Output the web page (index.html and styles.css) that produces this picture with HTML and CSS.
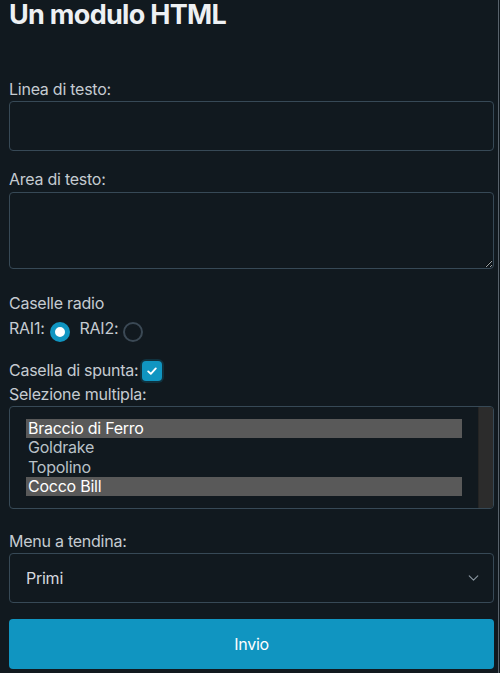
FILE: index.html
```html
<!DOCTYPE html>
<html lang="it">
<head>
<meta charset="utf-8">
<title>Un modulo HTML</title>
<link rel="stylesheet" href="styles.css">
</head>
<body>
<div class="frame">
  <main class="container">
    <h1 class="title">Un modulo HTML</h1>
    <form class="form" onsubmit="return false">
      <label class="field-label" for="linea">Linea di testo:</label>
      <input class="text-input" id="linea" type="text">

      <label class="field-label" for="area">Area di testo:</label>
      <textarea class="text-area" id="area"></textarea>

      <div class="field-label">Caselle radio</div>
      <div class="radio-row">
        <span class="inline-label">RAI1:</span><span class="radio radio-checked" role="radio" aria-checked="true"></span>
        <span class="inline-label spaced">RAI2:</span><span class="radio" role="radio" aria-checked="false"></span>
      </div>

      <div class="check-row">
        <span class="inline-label">Casella di spunta:</span><span class="checkbox" role="checkbox" aria-checked="true"><svg class="check-icon" viewBox="0 0 12 12" width="12" height="12"><path d="M2.2 6.4 L4.8 8.8 L9.8 3.4" fill="none" stroke="#fff" stroke-width="1.9" stroke-linecap="round" stroke-linejoin="round"/></svg></span>
      </div>

      <div class="field-label">Selezione multipla:</div>
      <div class="listbox" role="listbox" aria-multiselectable="true">
        <div class="listbox-options">
          <div class="option option-selected" role="option" aria-selected="true">Braccio di Ferro</div>
          <div class="option" role="option">Goldrake</div>
          <div class="option" role="option">Topolino</div>
          <div class="option option-selected" role="option" aria-selected="true">Cocco Bill</div>
        </div>
        <div class="listbox-track"></div>
      </div>

      <label class="field-label" for="menu">Menu a tendina:</label>
      <div class="select-wrap">
        <select class="dropdown" id="menu">
          <option>Primi</option>
          <option>Secondi</option>
          <option>Dolci</option>
        </select>
        <svg class="chevron" viewBox="0 0 12 7" width="11" height="6"><path d="M1 1 L6 6 L11 1" fill="none" stroke="#8a96a0" stroke-width="1.3" stroke-linecap="round" stroke-linejoin="round"/></svg>
      </div>

      <button class="submit" type="submit">Invio</button>
    </form>
  </main>
</div>
</body>
</html>
```

FILE: styles.css
```css
html, body {
  margin: 0;
  padding: 0;
  background: #11191f;
}

body {
  font-family: Inter, "Noto Sans", "Liberation Sans", sans-serif;
  font-size: 16px;
  letter-spacing: -0.25px;
  color: #c5cbd1;
}

.frame {
  width: 499px;
  min-height: 673px;
  box-sizing: border-box;
  border-right: 1px solid #58626b;
  padding: 0 4px 0 9px;
}

.container {
  display: flex;
  flex-direction: column;
}

.title {
  margin: 0 0 48px;
  padding-top: 1px;
  font-size: 27px;
  line-height: 28px;
  font-weight: 700;
  color: #edf0f3;
  letter-spacing: -0.7px;
}

.form {
  display: flex;
  flex-direction: column;
}

.field-label {
  display: block;
  line-height: 24px;
  height: 24px;
  color: #c5cbd1;
}

.text-input,
.text-area,
.dropdown {
  box-sizing: border-box;
  width: 100%;
  background: #11191f;
  border: 1px solid #374956;
  border-radius: 4px;
  color: #c5cbd1;
  font-family: inherit;
  font-size: 16px;
  outline: none;
  margin: 0;
}

.text-input {
  height: 50px;
  padding: 12px 16px;
  margin-bottom: 16px;
}

.text-area {
  display: block;
  height: 77px;
  padding: 12px 16px;
  margin-top: 1px;
  margin-bottom: 22px;
  resize: vertical;
  color-scheme: dark;
}

.radio-row,
.check-row {
  display: flex;
  align-items: center;
  height: 24px;
  line-height: 24px;
}

.radio-row {
  margin-top: 1px;
  margin-bottom: 18px;
}

.inline-label {
  color: #c5cbd1;
}

.spaced {
  margin-left: 10px;
}

.radio {
  box-sizing: border-box;
  width: 20px;
  height: 20px;
  border-radius: 50%;
  border: 2px solid #3b4955;
  margin-left: 5px;
  margin-top: 8px;
}

.radio-checked {
  border: 5.5px solid #1095c1;
  background: #ffffff;
}

.checkbox {
  box-sizing: border-box;
  width: 20px;
  height: 20px;
  border-radius: 4px;
  background: #1095c1;
  margin-left: 4px;
  margin-top: 2px;
  box-shadow: 0 0 0 2px #10323f;
  display: flex;
  align-items: center;
  justify-content: center;
}

.check-icon {
  display: block;
}

.listbox {
  box-sizing: border-box;
  height: 103px;
  border: 1px solid #374956;
  border-radius: 4px;
  display: flex;
  overflow: hidden;
  margin-bottom: 20px;
}

.listbox-options {
  flex: 1;
  padding: 12px 16px 12px 16px;
  display: flex;
  flex-direction: column;
}

.option {
  height: 19.3px;
  line-height: 19px;
  padding-left: 2px;
  color: #b9c1c8;
  white-space: nowrap;
}

.option-selected {
  background: #595959;
  color: #ffffff;
}

.listbox-track {
  width: 14px;
  background: #2c2c2c;
  border-left: 1px solid #242424;
}

.select-wrap {
  position: relative;
  margin-bottom: 16px;
}

.dropdown {
  display: block;
  height: 50px;
  padding: 0 16px;
  appearance: none;
  -webkit-appearance: none;
  color: #d6dadf;
  letter-spacing: -0.25px;
}

.chevron {
  position: absolute;
  right: 15px;
  top: 22px;
  pointer-events: none;
}

.submit {
  box-sizing: border-box;
  width: 100%;
  height: 50px;
  border: 0;
  border-radius: 4px;
  background: #1095c1;
  color: #ffffff;
  font-family: inherit;
  font-size: 16px;
  letter-spacing: -0.25px;
  padding: 0;
  margin: 0;
  cursor: pointer;
}
```
